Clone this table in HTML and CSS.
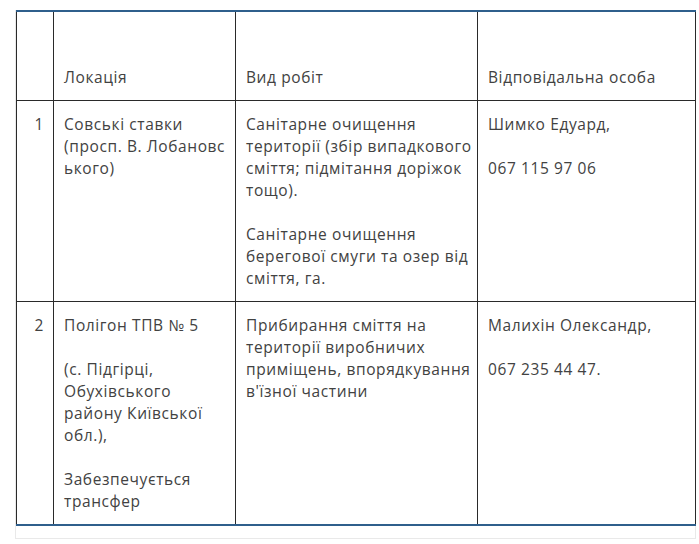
FILE: index.html
```html
<!DOCTYPE html>
<html lang="uk">
<head>
<meta charset="utf-8">
<link rel="stylesheet" href="styles.css">
</head>
<body>
<div class="table-wrap">
  <table class="works">
    <colgroup>
      <col class="c-num">
      <col class="c-loc">
      <col class="c-kind">
      <col class="c-person">
    </colgroup>
    <tr class="head">
      <td class="num"></td>
      <td>Локація</td>
      <td>Вид робіт</td>
      <td>Відповідальна особа</td>
    </tr>
    <tr>
      <td class="num">1</td>
      <td>Совські ставки<br>(просп. В. Лобановс<br>ького)</td>
      <td>Санітарне очищення<br>території (збір випадкового<br>сміття; підмітання доріжок<br>тощо).<br><br>Санітарне очищення<br>берегової смуги та озер від<br>сміття, га.</td>
      <td>Шимко Едуард,<br><br>067 115 97 06</td>
    </tr>
    <tr>
      <td class="num">2</td>
      <td>Полігон ТПВ № 5<br><br>(с. Підгірці,<br>Обухівського<br>району Київської<br>обл.),<br><br>Забезпечується<br>трансфер</td>
      <td>Прибирання сміття на<br>території виробничих<br>приміщень, впорядкування<br>в'їзної частини</td>
      <td>Малихін Олександр,<br><br>067 235 44 47.</td>
    </tr>
  </table>
</div>
</body>
</html>
```

FILE: styles.css
```css
html, body {
  margin: 0;
  padding: 0;
  background: #ffffff;
}

body {
  font-family: "Open Sans", "DejaVu Sans", sans-serif;
  font-size: 15.5px;
  letter-spacing: 0.6px;
  color: #424242;
}

.table-wrap {
  margin: 10px 0 0 15px;
  width: 679px;
  border: 1px solid #e9e9e9;
  border-top: none;
  padding-bottom: 12px;
}

.works {
  width: 679px;
  border-collapse: collapse;
  table-layout: fixed;
  border-top: 2px solid #2f5f8c;
  border-bottom: 2px solid #2f5f8c;
}

.c-num { width: 37px; }
.c-loc { width: 182px; }
.c-kind { width: 242px; }
.c-person { width: 218px; }

.works td {
  border: 1px solid #2a2a2a;
  padding: 12px 10px;
  line-height: 22px;
  vertical-align: top;
  white-space: nowrap;
  overflow: hidden;
}

.works tr:first-child td {
  border-top: 2px solid #2f5f8c;
}

.works tr:last-child td {
  border-bottom: 2px solid #2f5f8c;
}

.works .head td {
  height: 64px;
  vertical-align: bottom;
}

.works td.num {
  text-align: right;
  padding-right: 9px;
  padding-left: 0;
}
```
